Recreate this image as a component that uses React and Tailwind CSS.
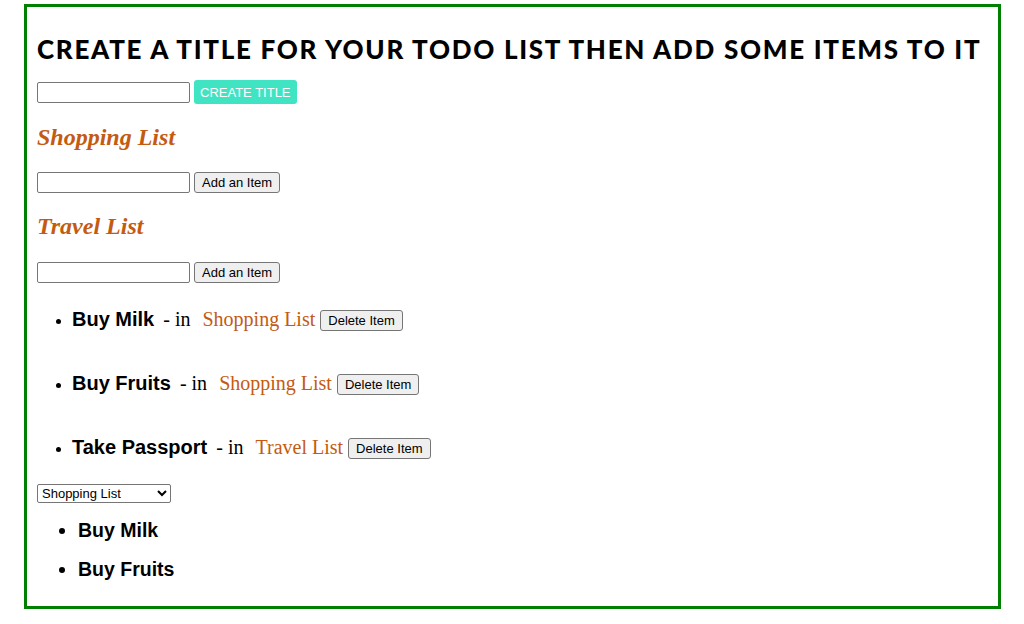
import React, { useState } from "react";

const todos = [
  { text: "Buy Milk", list: "Shopping List" },
  { text: "Buy Fruits", list: "Shopping List" },
  { text: "Take Passport", list: "Travel List" },
];

const AddRow = ({ label }) => (
  <div className="flex items-center gap-[4px] h-[21px]">
    <input
      type="text"
      className="w-[153px] h-[21px] border border-[#767676] rounded-[2px] bg-white px-[2px] text-[13px]"
    />
    <button
      type="button"
      className="h-[21px] px-[7px] border border-[#767676] rounded-[3px] bg-[#efefef] text-[13px] leading-none text-black"
    >
      {label}
    </button>
  </div>
);

export default function App() {
  const [selected, setSelected] = useState("Shopping List");
  const filtered = todos.filter((t) => t.list === selected);

  return (
    <div className="bg-white min-h-[624px] pt-[4px] pl-[24px] font-['Liberation_Sans',Arial,sans-serif]">
      <div className="w-[977px] h-[605px] border-[3px] border-[#008000] px-[10px] pt-[24px]">
        {/* Heading */}
        <h1 className="h-[36px] flex items-center font-['Lato',sans-serif] font-black uppercase text-[26px] text-black tracking-[1.7px] whitespace-nowrap">
          Create a title for your todo list then add some items to it
        </h1>

        <div className="mt-[13px] flex items-center gap-[4px] h-[24px]">
          <input
            type="text"
            className="w-[153px] h-[21px] border border-[#767676] rounded-[2px] bg-white px-[2px] text-[13px]"
          />
          <button
            type="button"
            className="h-[24px] px-[6px] rounded-[3px] bg-[#41e4c2] text-white text-[13px] uppercase leading-none"
          >
            Create Title
          </button>
        </div>

        {/* Lists */}
        <h2 className="mt-[19px] h-[28px] flex items-center font-['Liberation_Serif',serif] italic font-bold text-[24px] text-[#c45b11]">
          Shopping List
        </h2>
        <div className="mt-[21px]">
          <AddRow label="Add an Item" />
        </div>

        <h2 className="mt-[19px] h-[28px] flex items-center font-['Liberation_Serif',serif] italic font-bold text-[24px] text-[#c45b11]">
          Travel List
        </h2>
        <div className="mt-[22px]">
          <AddRow label="Add an Item" />
        </div>

        {/* All todos */}
        <ul className="mt-[24px] list-disc pl-[35px] flex flex-col gap-[40px]">
          {todos.map((t, i) => (
            <li key={i} className="h-[24px] leading-[24px]">
              <span className="font-bold text-[20px] text-black">{t.text}</span>
              <span className="ml-[9px] font-['Liberation_Serif',serif] text-[20px] text-black">
                - in
              </span>
              <span className="ml-[12px] font-['Liberation_Serif',serif] text-[20px] text-[#c45b11]">
                {t.list}
              </span>
              <button
                type="button"
                className="ml-[5px] h-[21px] px-[7px] border border-[#767676] rounded-[3px] bg-[#efefef] text-[13px] leading-none text-black align-[1px]"
              >
                Delete Item
              </button>
            </li>
          ))}
        </ul>

        {/* Filter */}
        <div className="mt-[25px] flex h-[19px]">
          <select
            value={selected}
            onChange={(e) => setSelected(e.target.value)}
            className="w-[134px] h-[19px] border border-[#767676] rounded-[2px] bg-white text-[13px] text-black"
          >
            <option>Shopping List</option>
            <option>Travel List</option>
          </select>
        </div>

        <ul className="mt-[14px] list-disc pl-[41px] flex flex-col gap-[13px]">
          {filtered.map((t, i) => (
            <li key={i} className="h-[26px] leading-[26px] font-bold text-[19.5px] text-black">
              {t.text}
            </li>
          ))}
        </ul>
      </div>
    </div>
  );
}
